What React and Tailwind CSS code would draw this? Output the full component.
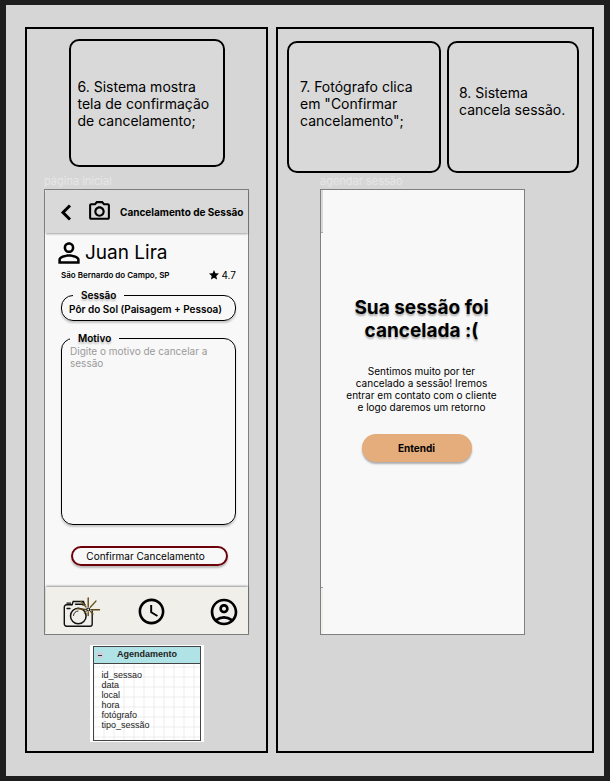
import {
  MdAccessTime,
  MdOutlineAccountCircle,
  MdOutlinePhotoCamera,
  MdPersonOutline,
  MdStar,
} from "react-icons/md";

const attributes = ["id_sessao", "data", "local", "hora", "fotógrafo", "tipo_sessão"];

function Panel({ children }) {
  return <section className="flex flex-col border-2 border-black">{children}</section>;
}

function Note({ className, children }) {
  return (
    <div
      className={`flex items-center rounded-[10px] border-2 border-black bg-[#d9d9d9] text-[14px] leading-[17px] ${className}`}
    >
      <p>{children}</p>
    </div>
  );
}

function Phone({ label, className, children }) {
  return (
    <div className={`w-[205px] ${className}`}>
      <h2 className="h-[14px] text-[11px] leading-[12px] text-[#e6e6e6]">{label}</h2>
      <div className="flex h-[446px] flex-col border border-[#808080] bg-[#f8f8f8]">{children}</div>
    </div>
  );
}

function BackChevron() {
  return (
    <svg viewBox="0 0 12 18" className="h-[18px] w-3" fill="none" stroke="#000" strokeWidth="3">
      <path d="M10 2.500L3 9.500l7 7" />
    </svg>
  );
}

function FlashCamera() {
  return (
    <svg viewBox="0 0 32 30" className="h-[30px] w-8 overflow-visible" fill="none" stroke="#111" strokeLinecap="round">
      <path
        d="M19.500 7.800H22M9 7.800H3.500a2.200 2.200 0 0 0-2.200 2.200v17a2.200 2.200 0 0 0 2.200 2.200h23.500a2.200 2.200 0 0 0 2.200-2.200V14"
        strokeWidth="1.400"
      />
      <path d="M9 7.800l1.200-3.300h10.300l1 3.300M12.500 7.300h6" strokeWidth="1.400" />
      <path d="M4 6.200h3.500M4 11.500h3" strokeWidth="1.300" />
      <circle cx="15.300" cy="19" r="7.800" strokeWidth="1.500" />
      <path d="M10.500 18.500a5 5 0 0 1 4.500-4.500" strokeWidth="0.900" />
      <path d="M25.200 1v8.500M25.200 15.500v3" stroke="#5c4714" strokeWidth="1.400" />
      <path d="M28 12.800h8.500M14.500 11.500l8 1" stroke="#5c4714" strokeWidth="1.400" />
      <path d="M27.300 10.300L33 4M23 10l-5-5.500M27.500 14.500l2.500 2.500M23 14.500l-1.500 1.500" stroke="#6b541c" strokeWidth="1.300" />
      <circle cx="25.200" cy="12.500" r="1.500" strokeWidth="1.200" />
    </svg>
  );
}

function CancelScreen() {
  return (
    <>
      <header className="ml-px flex h-[43px] items-center bg-[#d9d9d9] pl-[14px] shadow-[0_1px_2px_rgba(0,0,0,0.35)]">
        <button type="button" aria-label="Voltar">
          <BackChevron />
        </button>
        <MdOutlinePhotoCamera className="ml-[15px] h-[25px] w-[25px]" />
        <h1 className="ml-2 text-[10px] leading-3 font-bold whitespace-nowrap">Cancelamento de Sessão</h1>
      </header>
      <main className="flex flex-1 flex-col pt-1">
        <div className="flex items-center pl-2">
          <MdPersonOutline className="h-8 w-8" />
          <p className="text-[19px] leading-6">Juan Lira</p>
        </div>
        <div className="flex items-center justify-between pr-3 pl-4">
          <p className="text-[8px] leading-3 font-semibold">São Bernardo do Campo, SP</p>
          <p className="flex items-center text-[10px] leading-3">
            <MdStar className="h-3 w-3" />
            <span className="ml-px">4.7</span>
          </p>
        </div>
        <fieldset className="mt-2 mr-3 ml-4 h-8 rounded-[12px] border border-black px-[7px] shadow-[0_2px_2px_rgba(0,0,0,0.2)]">
          <legend className="ml-1 px-2 text-[10px] leading-3 font-semibold [text-shadow:0_2px_2px_rgba(0,0,0,0.25)]">
            <label htmlFor="sessao">Sessão</label>
          </legend>
          <input
            id="sessao"
            readOnly
            value="Pôr do Sol (Paisagem + Pessoa)"
            className="block h-4 w-full bg-transparent text-[10px] font-semibold outline-none"
          />
        </fieldset>
        <fieldset className="mt-[11px] mr-3 ml-4 h-[193px] rounded-[12px] border border-black px-2 shadow-[0_2px_2px_rgba(0,0,0,0.2)]">
          <legend className="px-2 text-[10px] leading-3 font-semibold [text-shadow:0_2px_2px_rgba(0,0,0,0.25)]">
            <label htmlFor="motivo">Motivo</label>
          </legend>
          <textarea
            id="motivo"
            placeholder="Digite o motivo de cancelar a sessão"
            className="block h-[170px] w-full resize-none bg-transparent pt-px text-[10px] leading-3 outline-none placeholder:text-[#9a9a9a]"
          />
        </fieldset>
        <button
          type="button"
          className="mt-[21px] mr-5 ml-[26px] h-5 rounded-full border-2 border-[#6d0008] pr-2 text-[10px] leading-3 shadow-[0_2px_2px_rgba(0,0,0,0.25)]"
        >
          Confirmar Cancelamento
        </button>
      </main>
      <footer className="ml-px flex h-[47px] items-center justify-between bg-[#f0efe9] pt-0.5 pr-2 pl-[17px] shadow-[0_-1px_2px_rgba(0,0,0,0.4)]">
        <button type="button" aria-label="Fotos">
          <FlashCamera />
        </button>
        <button type="button" aria-label="Horários">
          <MdAccessTime className="h-[31px] w-[31px]" />
        </button>
        <button type="button" aria-label="Perfil">
          <MdOutlineAccountCircle className="h-8 w-8" />
        </button>
      </footer>
    </>
  );
}

function CancelledScreen() {
  return (
    <div className="flex flex-1">
      <div className="flex w-0.5 flex-col justify-between">
        <div className="h-[43px] border-b border-[#aaa] bg-[#d9d9d9]" />
        <div className="h-[47px] border-t border-[#999] bg-[#f0efe9]" />
      </div>
      <div className="flex flex-1 flex-col items-center pt-[106px] pr-1 text-center">
        <h1 className="text-[19px] leading-[23px] font-bold [text-shadow:0_2px_2px_rgba(0,0,0,0.3)]">
          Sua sessão foi
          <br />
          cancelada :(
        </h1>
        <p className="mt-[23px] text-[10px] leading-3">
          Sentimos muito por ter
          <br />
          cancelado a sessão! Iremos
          <br />
          entrar em contato com o cliente
          <br />e logo daremos um retorno
        </p>
        <button
          type="button"
          className="mt-[21px] mr-[10px] h-7 w-[110px] rounded-full bg-[#e5ad7b] text-[10px] font-bold shadow-[0_2px_2px_rgba(0,0,0,0.3)]"
        >
          Entendi
        </button>
      </div>
    </div>
  );
}

function EntityTable() {
  return (
    <div className="mx-auto mt-[10px] w-[114px] bg-white px-[3px] py-px">
      <table className="w-full border-collapse border border-[#444] bg-white bg-[linear-gradient(#ececec_1px,transparent_1px),linear-gradient(90deg,#ececec_1px,transparent_1px)] bg-[size:10px_10px] font-['Liberation_Sans',Arial,sans-serif] text-[9px] text-[#222]">
        <thead>
          <tr className="h-[17px] border-b border-[#444] bg-[#b0e3e6]">
            <th className="p-0 font-bold">
              <div className="flex items-center">
                <button
                  type="button"
                  aria-label="Recolher"
                  className="ml-[3px] flex h-[6px] w-[6px] items-center bg-[#cfcfda] px-px"
                >
                  <span className="h-px w-full bg-[#333]" />
                </button>
                <span className="flex-1 pr-2">Agendamento</span>
              </div>
            </th>
          </tr>
        </thead>
        <tbody className="before:block before:h-[6px] after:block after:h-[10px]">
          {attributes.map((name) => (
            <tr key={name}>
              <td className="p-0 pl-2 leading-[10px]">{name}</td>
            </tr>
          ))}
        </tbody>
      </table>
    </div>
  );
}

export default function App() {
  return (
    <div className="min-h-screen bg-[#1e1e1e] px-[6px] py-[5px] font-['Inter',sans-serif] text-black">
      <div className="grid min-h-[771px] grid-cols-[243fr_318fr] gap-2 bg-[#d6d6d6] pt-[22px] pr-[10px] pb-[23px] pl-[19px]">
        <Panel>
          <div className="flex h-[146px] justify-center pt-[10px]">
            <Note className="h-32 w-[156px] pl-[7px]">
              6. Sistema mostra
              <br />
              tela de confirmação
              <br />
              de cancelamento;
            </Note>
          </div>
          <Phone label="página inicial" className="mx-auto">
            <CancelScreen />
          </Phone>
          <EntityTable />
        </Panel>
        <Panel>
          <div className="flex h-[146px] items-start gap-[6px] pt-3 pl-[9px]">
            <Note className="h-[132px] w-[154px] pb-2 pl-[11px]">
              7. Fotógrafo clica
              <br />
              em "Confirmar
              <br />
              cancelamento";
            </Note>
            <Note className="h-[132px] w-[132px] pb-3 pl-[10px]">
              8. Sistema
              <br />
              cancela sessão.
            </Note>
          </div>
          <Phone label="agendar sessão" className="ml-[42px]">
            <CancelledScreen />
          </Phone>
        </Panel>
      </div>
    </div>
  );
}
